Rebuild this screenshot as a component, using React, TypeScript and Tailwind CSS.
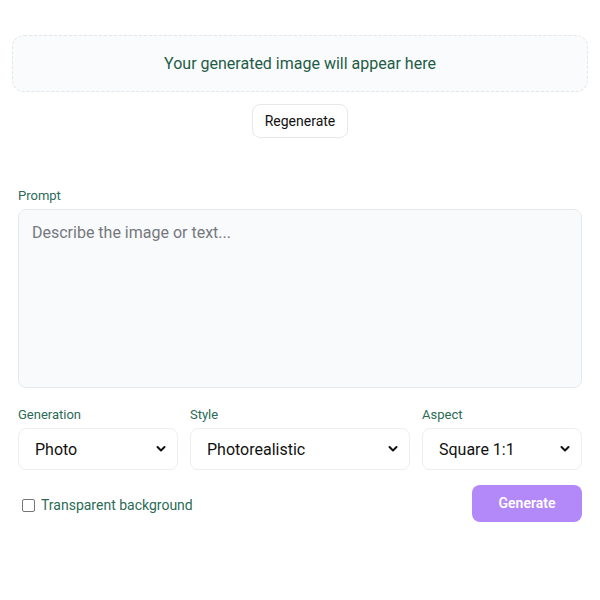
import React from "react";

function Chevron() {
  return (
    <svg className="pointer-events-none absolute right-[12px] top-1/2 -translate-y-1/2" width="10" height="7" viewBox="0 0 10 7" fill="none">
      <path d="M1.5 1.5 L5 5 L8.5 1.5" stroke="#111" strokeWidth="2" strokeLinecap="round" strokeLinejoin="round" />
    </svg>
  );
}

function Select({ value, w }: { value: string; w: string }) {
  return (
    <div className={`relative ${w}`}>
      <div className="h-[42px] rounded-lg border border-[#eceef0] bg-white pl-[16px] pt-[1px] flex items-center text-[16px] text-[#111]">
        {value}
      </div>
      <Chevron />
    </div>
  );
}

export default function App() {
  return (
    <div className="w-[600px] h-[600px] bg-white" style={{ fontFamily: "Roboto, 'Liberation Sans', sans-serif" }}>
      <div className="pt-[35px] px-[12px]">
        <div className="h-[57px] rounded-xl border border-dashed border-[#e3e6e9] bg-[#fafbfd] flex items-center justify-center text-[16px] text-[#1e5c46]">
          Your generated image will appear here
        </div>
        <div className="flex justify-center mt-[12px]">
          <button className="h-[34px] w-[96px] rounded-lg border border-[#e6e8eb] bg-white text-[14px] text-[#111]">
            Regenerate
          </button>
        </div>
      </div>
      <div className="px-[18px] mt-[49px]">
        <div className="text-[13px] leading-[18px] text-[#2b6b55]">Prompt</div>
        <div className="mt-[4px] h-[179px] rounded-lg border border-[#e6e9ec] bg-[#f9fafc] px-[13px] pt-[11px] text-[16px] text-[#75787c]">
          Describe the image or text...
        </div>
        <div className="mt-[18px] flex gap-[12px]">
          <div className="flex flex-col">
            <div className="text-[13px] leading-[18px] text-[#2b6b55] mb-[4px]">Generation</div>
            <Select value="Photo" w="w-[160px]" />
          </div>
          <div className="flex flex-col">
            <div className="text-[13px] leading-[18px] text-[#2b6b55] mb-[4px]">Style</div>
            <Select value="Photorealistic" w="w-[220px]" />
          </div>
          <div className="flex flex-col">
            <div className="text-[13px] leading-[18px] text-[#2b6b55] mb-[4px]">Aspect</div>
            <Select value="Square 1:1" w="w-[160px]" />
          </div>
        </div>
        <div className="mt-[15px] flex items-center justify-between">
          <label className="flex items-center gap-[6px] pl-[4px] pt-[3px] text-[14px] text-[#2b6b55]">
            <span className="w-[13px] h-[13px] rounded-[2px] border border-[#767676] bg-white" />
            Transparent background
          </label>
          <button className="h-[37px] w-[110px] rounded-lg bg-[#b388f8] text-white text-[14px] font-semibold">
            Generate
          </button>
        </div>
      </div>
    </div>
  );
}
